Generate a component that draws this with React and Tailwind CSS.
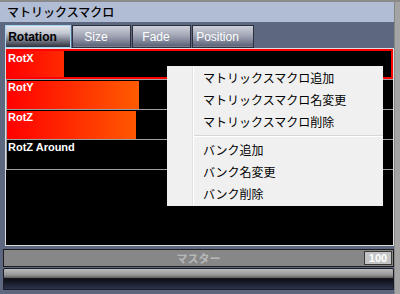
import React from 'react'

const TABS = [
  { label: 'Rotation', w: 'w-[66px]', active: true },
  { label: 'Size', w: 'w-[59px]' },
  { label: 'Fade', w: 'w-[59px]' },
  { label: 'Position', w: 'w-[62px]' },
]

const MENU_A = ['マトリックスマクロ追加', 'マトリックスマクロ名変更', 'マトリックスマクロ削除']
const MENU_B = ['バンク追加', 'バンク名変更', 'バンク削除']

function Row({ label, bar, selected }) {
  if (selected) {
    return (
      <div className="border-b border-[#a0a0a0]">
        <div className="relative h-[30px] border-2 border-[#ff0000]">
          <div className="h-full w-[56px] bg-[linear-gradient(to_right,#ff0000,#ff2a00)]"></div>
          <span className="absolute left-0 top-[1px] text-[11px] font-bold text-white leading-[13px]">{label}</span>
        </div>
      </div>
    )
  }
  return (
    <div className="relative h-[30px] border-l border-b border-[#a0a0a0] pt-[1px]">
      {bar && <div className={`h-full ${bar}`}></div>}
      <span className="absolute left-[1px] top-[1px] text-[11px] font-bold text-white leading-[13px]">{label}</span>
    </div>
  )
}

export default function App() {
  return (
    <div className="relative w-[400px] h-[294px] overflow-hidden bg-[#5e6780] flex flex-col font-['Liberation_Sans','Noto_Sans_CJK_JP',sans-serif]">
      <div className="h-[2px] bg-[#8a8a8a]"></div>
      <div className="flex flex-1">
        <div className="w-[394px] flex flex-col">
          {/* title */}
          <div className="h-[20px] bg-[#b1bcd5] pl-[7px] flex items-center text-[12px] font-medium text-black font-['Noto_Sans_CJK_JP',sans-serif]">
            マトリックスマクロ
          </div>

          {/* tabs */}
          <div className="flex gap-[1px] pl-[5px] pt-[3px] h-[26px]">
            {TABS.map(t => (
              <div
                key={t.label}
                className={
                  t.active
                    ? `${t.w} h-[23px] flex items-center justify-center pr-[11px] text-[12px] font-bold text-black border border-[#a6d6f4] bg-[linear-gradient(to_bottom,#e2e5ec_0%,#c2c6d0_35%,#8a8e9c_60%,#2e323e_100%)]`
                    : `${t.w} h-[23px] flex items-center justify-center pr-[11px] text-[12px] text-white border border-[#2c303c] bg-[linear-gradient(to_bottom,#cdd0da_0%,#a8acba_40%,#9096a8_60%,#5e6478_95%,#8a90a2_100%)]`
                }
              >
                {t.label}
              </div>
            ))}
          </div>

          {/* list panel */}
          <div className="ml-[5px] w-[389px] h-[198px] border border-[#dcdcdc] bg-black">
            <Row label="RotX" selected />
            <Row label="RotY" bar="w-[132px] bg-[linear-gradient(to_right,#ff0000,#ff5c00)]" />
            <Row label="RotZ" bar="w-[129px] bg-[linear-gradient(to_right,#ff0000,#ff5800)]" />
            <Row label="RotZ Around" />
          </div>

          {/* master */}
          <div className="mt-[3px] ml-[3px] w-[391px] h-[18px] border border-[#1c1c1c] bg-[#878787] grid grid-cols-[1fr_auto_1fr] items-center">
            <div></div>
            <span className="text-[11px] font-bold text-[#b8b8b8] font-['Noto_Sans_CJK_JP',sans-serif]">マスター</span>
            <div className="flex justify-end pr-[1px]">
              <div className="w-[28px] h-[14px] border border-[#3a3a3a] bg-[#c4c4c4] flex items-center justify-center text-[11px] font-bold text-white leading-none">
                100
              </div>
            </div>
          </div>

          {/* bottom fader */}
          <div className="mt-[1px] ml-[3px] w-[391px] h-[22px] rounded-t-[2px] border border-[#1c1c24] bg-[linear-gradient(to_bottom,#bcbcbc_0%,#959595_30%,#6a6a6a_42%,#0e0e14_48%,#181c2a_70%,#2e3450_100%)]"></div>
        </div>
        <div className="w-[6px] border-l border-[#868686] bg-[#a4a4a4]"></div>
      </div>

      {/* context menu */}
      <div className="absolute left-[167px] top-[66px] w-[216px] h-[140px] bg-[#f0f0f0] flex font-['Noto_Sans_CJK_JP',sans-serif] text-[12px] text-black">
        <div className="w-[26px] border-r border-[#e2e2e2]"></div>
        <div className="flex-1 border-l border-white pt-[1px]">
          {MENU_A.map(m => (
            <div key={m} className="h-[22px] pl-[9px] flex items-center">{m}</div>
          ))}
          <div className="h-[6px] flex flex-col justify-center">
            <div className="h-[1px] bg-[#d7d7d7]"></div>
            <div className="h-[1px] bg-white"></div>
          </div>
          {MENU_B.map(m => (
            <div key={m} className="h-[22px] pl-[9px] flex items-center">{m}</div>
          ))}
        </div>
      </div>
    </div>
  )
}
